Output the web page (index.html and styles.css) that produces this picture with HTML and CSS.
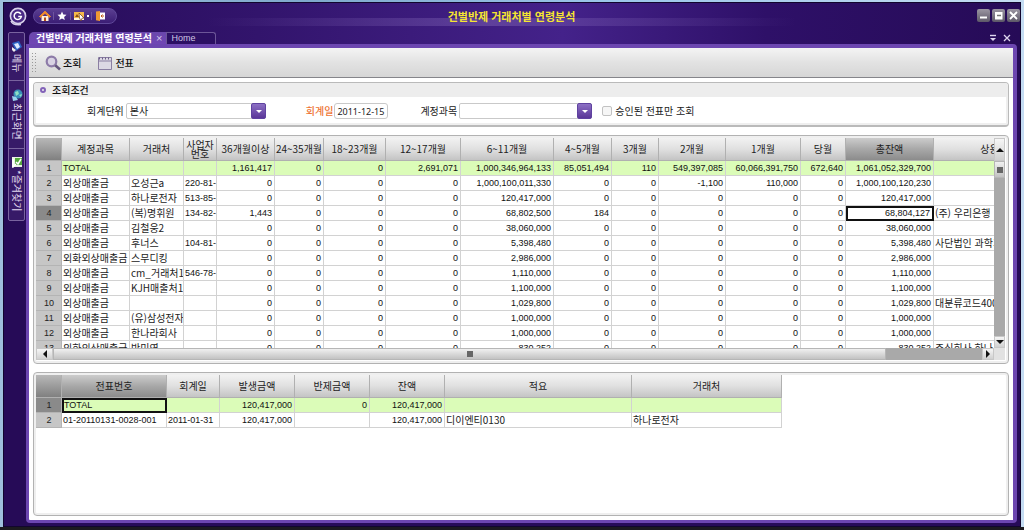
FILE: index.html
```html
<!DOCTYPE html>
<html lang="ko">
<head>
<meta charset="utf-8">
<title>건별반제 거래처별 연령분석</title>
<link rel="stylesheet" href="styles.css">
</head>
<body>
<div class="window">
  <nav class="rail">
    <svg class="logo" viewBox="0 0 20 20"><circle cx="10" cy="9" r="7.6" fill="#4a2a86" stroke="#d9d2ea" stroke-width="1.6"/><path d="M3 14c1 3 5 4 10 3.600" fill="none" stroke="#d9d2ea" stroke-width="1.500"/><path d="M12.800 7A3.600 3.600 0 1 0 13.300 9.600H10.200" fill="none" stroke="#fff" stroke-width="1.500"/></svg>
    <div class="rail-tabs">
      <button class="rail-tab r1"><svg viewBox="0 0 12 12"><path d="M1 3l7-2 3 6-6 4z" fill="#2c63c4"/><path d="M3 4l4-1 2 4-3 2z" fill="#dbe9ff"/><path d="M1 7l4 3-2 2-2-2z" fill="#eee"/></svg><span>메뉴</span></button>
      <button class="rail-tab r2"><svg viewBox="0 0 12 12"><circle cx="7" cy="5" r="4.500" fill="#3a8fb8"/><path d="M4 3l3-1 1 3-3 2zM8 6l3-1-1 3z" fill="#8de0c4"/><path d="M1 7l4 1 2 3-5 1z" fill="#9ad4f0"/></svg><span>최근화면</span></button>
      <button class="rail-tab r3"><svg viewBox="0 0 12 12"><path d="M1 1h10v10H1z" fill="#e9f2e4"/><path d="M4 2h7v7H4z" fill="#55a83e"/><path d="M5 6l2 2 3-5M2 3v8l3-3" fill="none" stroke="#fff" stroke-width="1.500"/></svg><span>*즐겨찾기</span></button>
    </div>
  </nav>
  <div class="stage">
    <header class="titlebar">
      <div class="quick">
        <button aria-label="홈"><svg viewBox="0 0 12 12"><path d="M2.500 6v5h7V6" fill="#fff0d8"/><path d="M0.500 6.500L6 1.200l5.500 5.300-1 .8L6 3.300 1.500 7.300z" fill="#f08a2c" stroke="#f08a2c"/><path d="M5 7.500h2V11H5z" fill="#b64a16"/></svg></button><i></i>
        <button aria-label="즐겨찾기"><svg viewBox="0 0 12 12"><path d="M6 1.500l1.300 3 3.200.3-2.400 2.100.7 3.200L6 8.400l-2.800 1.700.7-3.200L1.500 4.800l3.200-.3z" fill="#fff"/></svg></button><i></i>
        <button aria-label="화면"><svg viewBox="0 0 12 12"><path d="M1 2h10v7H1z" fill="#f5b94a"/><path d="M1 8h10v2H1z" fill="#fff3d8"/><path d="M2 7l2-3 2 3z" fill="#8a4c14"/><path d="M6 3l5 5-2 .2L8 11 6.500 8z" fill="#fff" stroke="#6b3a12" stroke-width=".7"/></svg></button><b></b><i></i>
        <button aria-label="나가기"><svg viewBox="0 0 12 12"><path d="M2 1.500L6 1v10l-4-.8z" fill="#f09a32"/><path d="M6 2.500h5v7H6z" fill="#fff" /><path d="M7 6h3M8.500 4.500L7 6l1.500 1.500" fill="none" stroke="#c05a18" stroke-width="1"/></svg></button>
      </div>
      <h1>건별반제 거래처별 연령분석</h1>
      <div class="winbtns">
        <button aria-label="최소화"><svg viewBox="0 0 13 13"><path d="M3 8.500h7" stroke="#fff" stroke-width="2"/></svg></button>
        <button aria-label="최대화"><svg viewBox="0 0 13 13"><path d="M3 3h7.500v7.500H3z" fill="#fff"/><path d="M5 6.500h4" stroke="#777" stroke-width="1.500"/></svg></button>
        <button aria-label="닫기"><svg viewBox="0 0 13 13"><path d="M3 3l7 7M10 3l-7 7" stroke="#fff" stroke-width="1.800"/></svg></button>
      </div>
    </header>
    <div class="tabs">
      <button class="tab on">건별반제 거래처별 연령분석<span>×</span></button>
      <button class="tab">Home</button>
      <div class="tabtools">
        <button aria-label="탭 목록"><svg viewBox="0 0 8 8"><path d="M1 1.500h6" stroke="#ddd5ee" stroke-width="1.400"/><path d="M1 4h6L4 7z" fill="#ddd5ee"/></svg></button>
        <button aria-label="탭 닫기"><svg viewBox="0 0 8 8"><path d="M1 1l6 6M7 1L1 7" stroke="#ddd5ee" stroke-width="1.300"/></svg></button>
      </div>
    </div>
    <main class="frame">
      <div class="toolbar">
        <span class="grip"></span>
        <button class="tool"><svg viewBox="0 0 16 16"><circle cx="6.500" cy="6.500" r="4.800" fill="#d9d3e4" stroke="#8d7ba8" stroke-width="2.200"/><path d="M10.200 10.200L15 14.500" stroke="#65577e" stroke-width="2.600"/></svg>조회</button>
        <button class="tool"><svg viewBox="0 0 16 16"><path d="M1.500 2.500h13v12h-13z" fill="#dcd8e4" stroke="#8a7ea2"/><path d="M1 6h14" stroke="#8a7ea2"/><path d="M2 3.500h12" stroke="#6d5f88" stroke-width="2" stroke-dasharray="1 2"/></svg>전표</button>
      </div>
      <div class="body">
        <section class="panel query">
          <h2>조회조건</h2>
          <form class="fields">
            <label for="unit">회계단위</label>
            <div class="combo c1"><select id="unit"><option>본사</option></select><span></span></div>
            <label class="f2" for="day">회계일</label>
            <input class="date" id="day" type="text" value="2011-12-15">
            <label class="f3" for="acct">계정과목</label>
            <div class="combo c2"><select id="acct"><option></option></select><span></span></div>
            <label class="chk"><input type="checkbox">승인된 전표만 조회</label>
          </form>
        </section>
        <section class="panel main-panel">
          <div class="view">
            <table class="grid main">
              <colgroup><col class="w26"><col class="w68"><col class="w54"><col class="w33"><col class="w58"><col class="w49"><col class="w62"><col class="w75"><col class="w93"><col class="w58"><col class="w47"><col class="w67"><col class="w75"><col class="w45"><col class="w88"><col class="w112"></colgroup>
              <thead><tr><th class="dark"></th><th>계정과목</th><th>거래처</th><th class="two">사업자<br>번호</th><th>36개월이상</th><th>24~35개월</th><th>18~23개월</th><th>12~17개월</th><th>6~11개월</th><th>4~5개월</th><th>3개월</th><th>2개월</th><th>1개월</th><th>당월</th><th class="sel">총잔액</th><th>상용</th></tr></thead>
              <tbody>
                <tr class="total"><th>1</th><td>TOTAL</td><td></td><td></td><td>1,161,417</td><td>0</td><td>0</td><td>2,691,071</td><td>1,000,346,964,133</td><td>85,051,494</td><td>110</td><td>549,397,085</td><td>60,066,391,750</td><td>672,640</td><td>1,061,052,329,700</td><td></td></tr>
                <tr><th>2</th><td>외상매출금</td><td>오성근a</td><td>220-81-</td><td>0</td><td>0</td><td>0</td><td>0</td><td>1,000,100,011,330</td><td>0</td><td>0</td><td>-1,100</td><td>110,000</td><td>0</td><td>1,000,100,120,230</td><td></td></tr>
                <tr><th>3</th><td>외상매출금</td><td>하나로전자</td><td>513-85-</td><td>0</td><td>0</td><td>0</td><td>0</td><td>120,417,000</td><td>0</td><td>0</td><td>0</td><td>0</td><td>0</td><td>120,417,000</td><td></td></tr>
                <tr><th class="cur">4</th><td>외상매출금</td><td>(복)명휘원</td><td>134-82-</td><td>1,443</td><td>0</td><td>0</td><td>0</td><td>68,802,500</td><td>184</td><td>0</td><td>0</td><td>0</td><td>0</td><td class="focus">68,804,127</td><td>(주) 우리은행</td></tr>
                <tr><th>5</th><td>외상매출금</td><td>김철웅2</td><td></td><td>0</td><td>0</td><td>0</td><td>0</td><td>38,060,000</td><td>0</td><td>0</td><td>0</td><td>0</td><td>0</td><td>38,060,000</td><td></td></tr>
                <tr><th>6</th><td>외상매출금</td><td>후너스</td><td>104-81-</td><td>0</td><td>0</td><td>0</td><td>0</td><td>5,398,480</td><td>0</td><td>0</td><td>0</td><td>0</td><td>0</td><td>5,398,480</td><td>사단법인 과학기</td></tr>
                <tr><th>7</th><td>외화외상매출금</td><td>스무디킹</td><td></td><td>0</td><td>0</td><td>0</td><td>0</td><td>2,986,000</td><td>0</td><td>0</td><td>0</td><td>0</td><td>0</td><td>2,986,000</td><td></td></tr>
                <tr><th>8</th><td>외상매출금</td><td>cm_거래처1</td><td>546-78-</td><td>0</td><td>0</td><td>0</td><td>0</td><td>1,110,000</td><td>0</td><td>0</td><td>0</td><td>0</td><td>0</td><td>1,110,000</td><td></td></tr>
                <tr><th>9</th><td>외상매출금</td><td>KJH매출처1</td><td></td><td>0</td><td>0</td><td>0</td><td>0</td><td>1,100,000</td><td>0</td><td>0</td><td>0</td><td>0</td><td>0</td><td>1,100,000</td><td></td></tr>
                <tr><th>10</th><td>외상매출금</td><td></td><td></td><td>0</td><td>0</td><td>0</td><td>0</td><td>1,029,800</td><td>0</td><td>0</td><td>0</td><td>0</td><td>0</td><td>1,029,800</td><td>대분류코드4003</td></tr>
                <tr><th>11</th><td>외상매출금</td><td>(유)삼성전자</td><td></td><td>0</td><td>0</td><td>0</td><td>0</td><td>1,000,000</td><td>0</td><td>0</td><td>0</td><td>0</td><td>0</td><td>1,000,000</td><td></td></tr>
                <tr><th>12</th><td>외상매출금</td><td>한나라회사</td><td></td><td>0</td><td>0</td><td>0</td><td>0</td><td>1,000,000</td><td>0</td><td>0</td><td>0</td><td>0</td><td>0</td><td>1,000,000</td><td></td></tr>
                <tr><th>13</th><td>외화외상매출금</td><td>박미영</td><td></td><td>0</td><td>0</td><td>0</td><td>0</td><td>830,252</td><td>0</td><td>0</td><td>0</td><td>0</td><td>0</td><td>830,252</td><td>주식회사 하나</td></tr>
              </tbody>
            </table>
          </div>
          <div class="vbar"><button class="up" aria-label="위로"></button><div class="vthumb"></div><button class="down" aria-label="아래로"></button></div>
          <div class="hbar"><button class="left" aria-label="왼쪽"></button><div class="hthumb"></div><button class="right" aria-label="오른쪽"></button></div>
        </section>
        <section class="panel sub-panel">
          <table class="grid sub">
            <colgroup><col class="w26"><col class="w105"><col class="w53"><col class="w75"><col class="w75"><col class="w75"><col class="w187"><col class="w150"></colgroup>
            <thead><tr><th class="dark"></th><th class="sel">전표번호</th><th>회계일</th><th>발생금액</th><th>반제금액</th><th>잔액</th><th>적요</th><th>거래처</th></tr></thead>
            <tbody>
              <tr class="total"><th class="cur">1</th><td class="focus">TOTAL</td><td></td><td>120,417,000</td><td>0</td><td>120,417,000</td><td></td><td></td></tr>
              <tr><th>2</th><td>01-20110131-0028-001</td><td>2011-01-31</td><td>120,417,000</td><td></td><td>120,417,000</td><td>디이엔티0130</td><td>하나로전자</td></tr>
            </tbody>
          </table>
        </section>
      </div>
    </main>
  </div>
</div>
</body>
</html>
```
FILE: styles.css
```css
*, *::before, *::after { box-sizing: border-box; }
body {
  margin: 0;
  height: 100vh;
  padding: 2px 3px 0;
  background: linear-gradient(90deg, #9fc0dc, #7fa8cc 30%, #9cc6ea 60%, #c4dcf2);
  font: 10px/12px "Noto Sans CJK KR", sans-serif;
  color: #222;
  border-bottom: 3px solid #1c1a20;
}
button, input, select { font: inherit; color: inherit; }
button { border: 0; padding: 0; background: none; display: flex; align-items: center; }
svg { display: block; flex: none; }
h1, h2 { margin: 0; }

.window {
  display: flex;
  height: 100%;
  border: 1px solid #12062e;
  background:
    linear-gradient(90deg, transparent 20%, #8d72c066 48%, transparent 78%) 0 15px / 100% 8px no-repeat,
    linear-gradient(90deg, #260b57, #32146c 25%, #44228a 55%, #2e1068 75%, #260b57) 0 0 / 100% 46px no-repeat,
    #260b57;
}
.rail { width: 22px; padding: 4px 0 0 4px; display: flex; flex-direction: column; flex: none; }
.logo { width: 20px; height: 20px; }
.rail-tabs { margin-top: 5px; width: 17px; border: 1px solid #79639f; border-radius: 2px; background: #371a68; }
.rail-tab { width: 15px; flex-direction: column; gap: 2px; color: #e0d8ee; border-bottom: 1px solid #79639f; }
.rail-tab:last-child { border-bottom: 0; }
.rail-tab span { writing-mode: vertical-rl; text-orientation: sideways; }
.rail-tab svg { width: 12px; height: 12px; }
.r1 { padding-top: 7px; height: 48px; }
.r2 { padding-top: 8px; height: 68px; }
.r3 { padding-top: 7px; height: 71px; }

.stage { flex: 1; min-width: 0; display: flex; flex-direction: column; padding-right: 3px; }
.titlebar { height: 29px; padding-right: 20px; display: grid; grid-template-columns: 1fr auto 1fr; align-items: center; }
.titlebar h1 { font-size: 11px; line-height: 16px; font-weight: 700; color: #f5e531; padding-bottom: 4px; }
.quick {
  justify-self: start; display: flex; align-items: center; margin: 0 0 4px 7px; height: 16px; width: 84px; padding: 0 5px;
  gap: 2px; border-radius: 8px; background: linear-gradient(#5b3f92, #3b1d75); border: 1px solid #5f489a;
}
.quick svg { width: 12px; height: 12px; }
.quick i { width: 1px; height: 8px; background: #6d559f; }
.quick b { width: 2px; height: 2px; background: #fff; }
.winbtns { justify-self: end; display: flex; gap: 2px; margin: 0 -23px 4px 0; }
.winbtns button { width: 13px; height: 13px; border-radius: 2px; background: linear-gradient(#9b96a2, #5d5868); }
.winbtns svg { width: 13px; height: 13px; }

.tabs { display: flex; height: 12px; align-items: stretch; }
.tab { padding: 0 4px; width: 50px; font: 9px/11px "Liberation Sans", sans-serif; color: #cfc5e2; border: 1px solid #6c5698; border-bottom: 0; border-radius: 0 3px 0 0; background: #2c1063; }
.tab.on { width: auto; margin-left: 3px; padding: 0 4px 0 7px; border: 0; border-radius: 5px 0 0 0; background: linear-gradient(#6a47ac, #7046b4); color: #fff; font: 700 10px/12px "Noto Sans CJK KR", sans-serif; }
.tab.on span { font: 11px/12px "Liberation Sans", sans-serif; margin-left: 4px; color: #d5c8ea; }
.tabtools { margin-left: auto; display: flex; gap: 6px; margin-right: 6px; align-items: center; }
.tabtools svg { width: 8px; height: 8px; }

.frame {
  flex: 1; min-height: 0; display: flex; flex-direction: column; margin-bottom: 3px;
  border: 3px solid #6c46b0; border-top-width: 4px; border-right-width: 4px; border-radius: 0 4px 4px 4px; background: #fff;
}
.toolbar { height: 30px; flex: none; display: flex; align-items: center; gap: 16px; padding-left: 2px; border-bottom: 1px solid #85858a; background: linear-gradient(#f4f4f4, #e2e2e2 50%, #d6d6d6); }
.grip { width: 5px; height: 22px; margin-right: -7px; background: radial-gradient(circle, #999 1px, transparent 1px) 0 0 / 3px 3px; }
.tool { gap: 2px; color: #111; font-weight: 500; }
.tool svg { width: 16px; height: 16px; }
.body { flex: 1; min-height: 0; display: flex; flex-direction: column; padding: 4px; gap: 8px; }

.panel { border: 1px solid #b2b2b2; border-radius: 4px; background: #fff; box-shadow: inset 0 0 0 2px #efefef; }
.query { height: 45px; flex: none; border-bottom-width: 2px; border-color: #bababa; }
.query h2 { display: flex; align-items: center; height: 14px; padding-left: 6px; gap: 6px; background: #ededed; border-radius: 3px; font-size: 10px; font-weight: 500; color: #111; }
.query h2::before { content: ""; width: 6px; height: 6px; border: 2px solid #8262b8; border-radius: 50%; }
.fields { display: flex; align-items: center; margin: 6px 0 0 53px; white-space: nowrap; }
.fields > * { flex: none; }
.combo { position: relative; height: 16px; margin-left: 2px; }
.combo select { display: block; width: 100%; height: 16px; appearance: none; border: 1px solid #c9c9c9; border-radius: 2px; background: #fff; padding: 0 3px; }
.combo span { position: absolute; right: 0; top: 0; width: 15px; height: 16px; border-radius: 2px; background: linear-gradient(#8c70c4, #5a3698); border: 1px solid #5f42a0; pointer-events: none; }
.combo span::after { content: ""; position: absolute; left: 4px; top: 6px; border: 3px solid transparent; border-top-color: #fff; border-bottom: 0; }
.c1 { width: 140px; }
.c2 { width: 133px; }
.f2 { margin-left: 40px; color: #ee7434; font-weight: 500; }
.f3 { margin-left: 32px; }
.date { width: 54px; height: 16px; margin-left: 1px; padding: 0 2px; border: 1px solid #c9c9c9; border-radius: 3px; font: 9px/14px "Noto Sans", sans-serif; }
.chk { display: flex; align-items: center; gap: 3px; margin-left: 10px; }
.chk input { appearance: none; width: 10px; height: 10px; margin: 0; border: 1px solid #c2c2c2; border-radius: 2px; background: #f6f6f6; }

.main-panel { flex: 8 1 0; min-height: 0; display: grid; grid-template: minmax(0, 1fr) 12px / minmax(0, 1fr) 11px; padding: 2px 3px 3px 2px; }
.sub-panel { flex: 5 1 0; min-height: 0; padding: 2px; overflow: hidden; }
.view { overflow: hidden; }
.grid { table-layout: fixed; border-collapse: separate; border-spacing: 0; }
.main { width: 1010px; }
.sub { width: 746px; }
.w26 { width: 26px; } .w33 { width: 33px; } .w45 { width: 45px; } .w47 { width: 47px; }
.w49 { width: 49px; } .w53 { width: 53px; } .w54 { width: 54px; } .w58 { width: 58px; }
.w62 { width: 62px; } .w67 { width: 67px; } .w68 { width: 68px; } .w75 { width: 75px; }
.w88 { width: 88px; } .w93 { width: 93px; } .w105 { width: 105px; } .w112 { width: 112px; }
.w150 { width: 150px; } .w187 { width: 187px; }
.grid th, .grid td { padding: 0 0 0 1px; height: 15px; line-height: 14px; overflow: hidden; white-space: nowrap; border-right: 1px solid #d2d2d2; border-bottom: 1px solid #d2d2d2; font-weight: 400; text-align: left; }
.grid thead th { height: 23px; padding: 0; text-align: center; border-color: #b0b0b0; background: linear-gradient(#f2f2f2, #e0e0e0 50%, #c4c4c4); }
.grid thead .two { line-height: 9px; }
.grid thead .dark { background: linear-gradient(#b8b8b8, #808080); }
.grid thead .sel { background: linear-gradient(#cccccc, #a8a8a8 50%, #8c8c8c); }
.grid tbody th { text-align: center; background: #c6c6c6; border-color: #b4b4b4; font-family: "Liberation Sans", sans-serif; font-size: 9px; }
.grid tbody .cur { background: #8a8a8a; }
.grid .total td { background: #dbfcb8; }
.main td:nth-child(n+4):nth-child(-n+15), .sub td:nth-child(-n+6), .total td { font-family: "Liberation Sans", sans-serif; font-size: 9px; color: #111; }
.main td:nth-child(n+5):nth-child(-n+15), .sub td:nth-child(n+4):nth-child(-n+6) { text-align: right; padding-right: 2px; }
.grid td.focus { border: 2px solid #111; line-height: 11px; padding-left: 0; }

.vbar { display: flex; flex-direction: column; background: #a9a9a9; }
.hbar { display: flex; background: #a9a9a9; border-right: 11px solid #e2e2e2; grid-column: 1 / 3; }
.vbar button, .hbar button { width: 11px; height: 12px; justify-content: center; background: linear-gradient(#f6f6f6, #d0d0d0); border: 1px solid #c8c8c8; flex: none; }
.vbar button::before, .hbar button::before { content: ""; border: 4px solid transparent; }
.vbar .up { height: 23px; }
.vbar .up::before { border-bottom-color: #111; border-top: 0; }
.vbar .down { margin-top: auto; }
.vbar .down::before { border-top-color: #111; border-bottom: 0; }
.hbar .left { width: 17px; }
.hbar .left::before { border-right-color: #111; border-left: 0; }
.hbar .right { width: 12px; margin-left: auto; }
.hbar .right::before { border-left-color: #111; border-right: 0; }
.vthumb, .hthumb { display: flex; align-items: center; justify-content: center; border: 1px solid #b6b6b6; background: linear-gradient(#f0f0f0, #c2c2c2); }
.vthumb { height: 17px; }
.hthumb { width: 87%; }
.vthumb::before, .hthumb::before { content: ""; width: 6px; height: 6px; background: #666; }
```
